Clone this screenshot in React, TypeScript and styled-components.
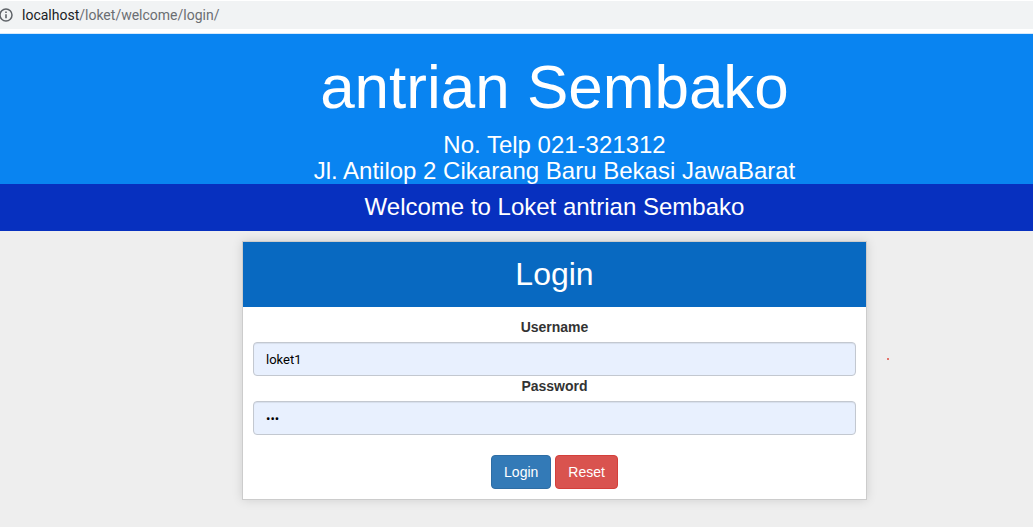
import React from "react";
import styled, { createGlobalStyle } from "styled-components";

const GlobalStyle = createGlobalStyle`
  *, *::before, *::after { box-sizing: border-box; }
  html, body, #root { min-height: 100%; }
  body {
    margin: 0;
    background: #eeeeee;
    color: #333333;
    font: 14px/20px "Liberation Sans", Arial, sans-serif;
    overflow-x: hidden;
  }
`;

const AddressBar = styled.div`
  display: flex;
  align-items: center;
  gap: 9px;
  height: 34px;
  padding-bottom: 4px;
  background: linear-gradient(#ffffff 1px, #f1f3f4 1px, #f1f3f4 29px, #ffffff 29px, #ffffff 33px, #d5e9fc 33px);
  color: #6b6e72;
  font: 14px/18px Roboto, "Noto Sans", sans-serif;

  svg {
    flex: none;
    margin-left: -1px;
  }
`;

const Host = styled.span`
  color: #202124;
`;

const Banner = styled.header`
  padding: 18px 0 0 76px;
  background: #0984f1;
  color: #ffffff;
  text-align: center;
`;

const SiteName = styled.h1`
  margin: 0 0 10px;
  font-size: 62px;
  font-weight: 400;
  line-height: 70px;
`;

const Contact = styled.p`
  margin: 0;
  font-size: 24px;
  line-height: 26px;
`;

const Welcome = styled.h2`
  margin: 0;
  padding: 10px 0 11px 76px;
  background: #0730bf;
  color: #ffffff;
  font-size: 24px;
  font-weight: 400;
  line-height: 26px;
  text-align: center;
`;

const Main = styled.main`
  display: flex;
  justify-content: center;
  padding: 10px 0 27px 76px;
`;

const Card = styled.section`
  position: relative;
  width: 100%;
  max-width: 625px;
  border: 1px solid #cccccc;
  background: #ffffff;
  box-shadow: 0 0 10px rgba(0, 0, 0, 0.13);
`;

const CardTitle = styled.h3`
  margin: 0;
  padding: 15px 10px;
  background: #0869c1;
  color: #ffffff;
  font-size: 32px;
  font-weight: 400;
  line-height: 35px;
  text-align: center;
`;

const LoginForm = styled.form`
  padding: 10px;
`;

const Label = styled.label`
  display: block;
  margin-bottom: 5px;
  font-weight: 700;
  text-align: center;
`;

const TextInput = styled.input`
  display: block;
  width: 100%;
  height: 34px;
  padding: 6px 12px;
  border: 1px solid #c3c8d0;
  border-radius: 4px;
  outline: none;
  background: #e8f0fe;
  box-shadow: inset 0 1px 1px rgba(0, 0, 0, 0.075);
  color: #000000;
  font: 13px/20px Roboto, "Liberation Sans", sans-serif;
`;

const Actions = styled.div`
  display: flex;
  justify-content: center;
  gap: 4px;
  margin-top: 20px;
`;

const Button = styled.button<{ $fill: string; $edge: string }>`
  height: 34px;
  padding: 6px 12px;
  border: 1px solid ${({ $edge }) => $edge};
  border-radius: 4px;
  background: ${({ $fill }) => $fill};
  color: #ffffff;
  font: 14px/20px "Liberation Sans", Arial, sans-serif;
`;

const RedDot = styled.span`
  position: absolute;
  top: 116px;
  left: calc(100% + 21px);
  width: 2px;
  height: 2px;
  border-radius: 1px;
  background: #e04a3f;
`;

export default function App() {
  return (
    <>
      <GlobalStyle />
      <AddressBar>
        <svg width="14" height="14" viewBox="0 0 14 14" fill="none" aria-hidden="true">
          <circle cx="7" cy="7" r="6" stroke="#5f6368" strokeWidth="1.5" />
          <path d="M7 6.2v4.1M7 3.6v1.5" stroke="#5f6368" strokeWidth="1.6" />
        </svg>
        <span>
          <Host>localhost</Host>/loket/welcome/login/
        </span>
      </AddressBar>
      <Banner>
        <SiteName>antrian Sembako</SiteName>
        <Contact>No. Telp 021-321312</Contact>
        <Contact>Jl. Antilop 2 Cikarang Baru Bekasi JawaBarat</Contact>
      </Banner>
      <Welcome>Welcome to Loket antrian Sembako</Welcome>
      <Main>
        <Card>
          <CardTitle>Login</CardTitle>
          <LoginForm onSubmit={(event) => event.preventDefault()}>
            <Label htmlFor="username">Username</Label>
            <TextInput id="username" name="username" type="text" defaultValue="loket1" />
            <Label htmlFor="password">Password</Label>
            <TextInput id="password" name="password" type="password" defaultValue="123" />
            <Actions>
              <Button type="submit" $fill="#337ab7" $edge="#2e6da4">Login</Button>
              <Button type="reset" $fill="#d9534f" $edge="#d43f3a">Reset</Button>
            </Actions>
          </LoginForm>
          <RedDot />
        </Card>
      </Main>
    </>
  );
}
